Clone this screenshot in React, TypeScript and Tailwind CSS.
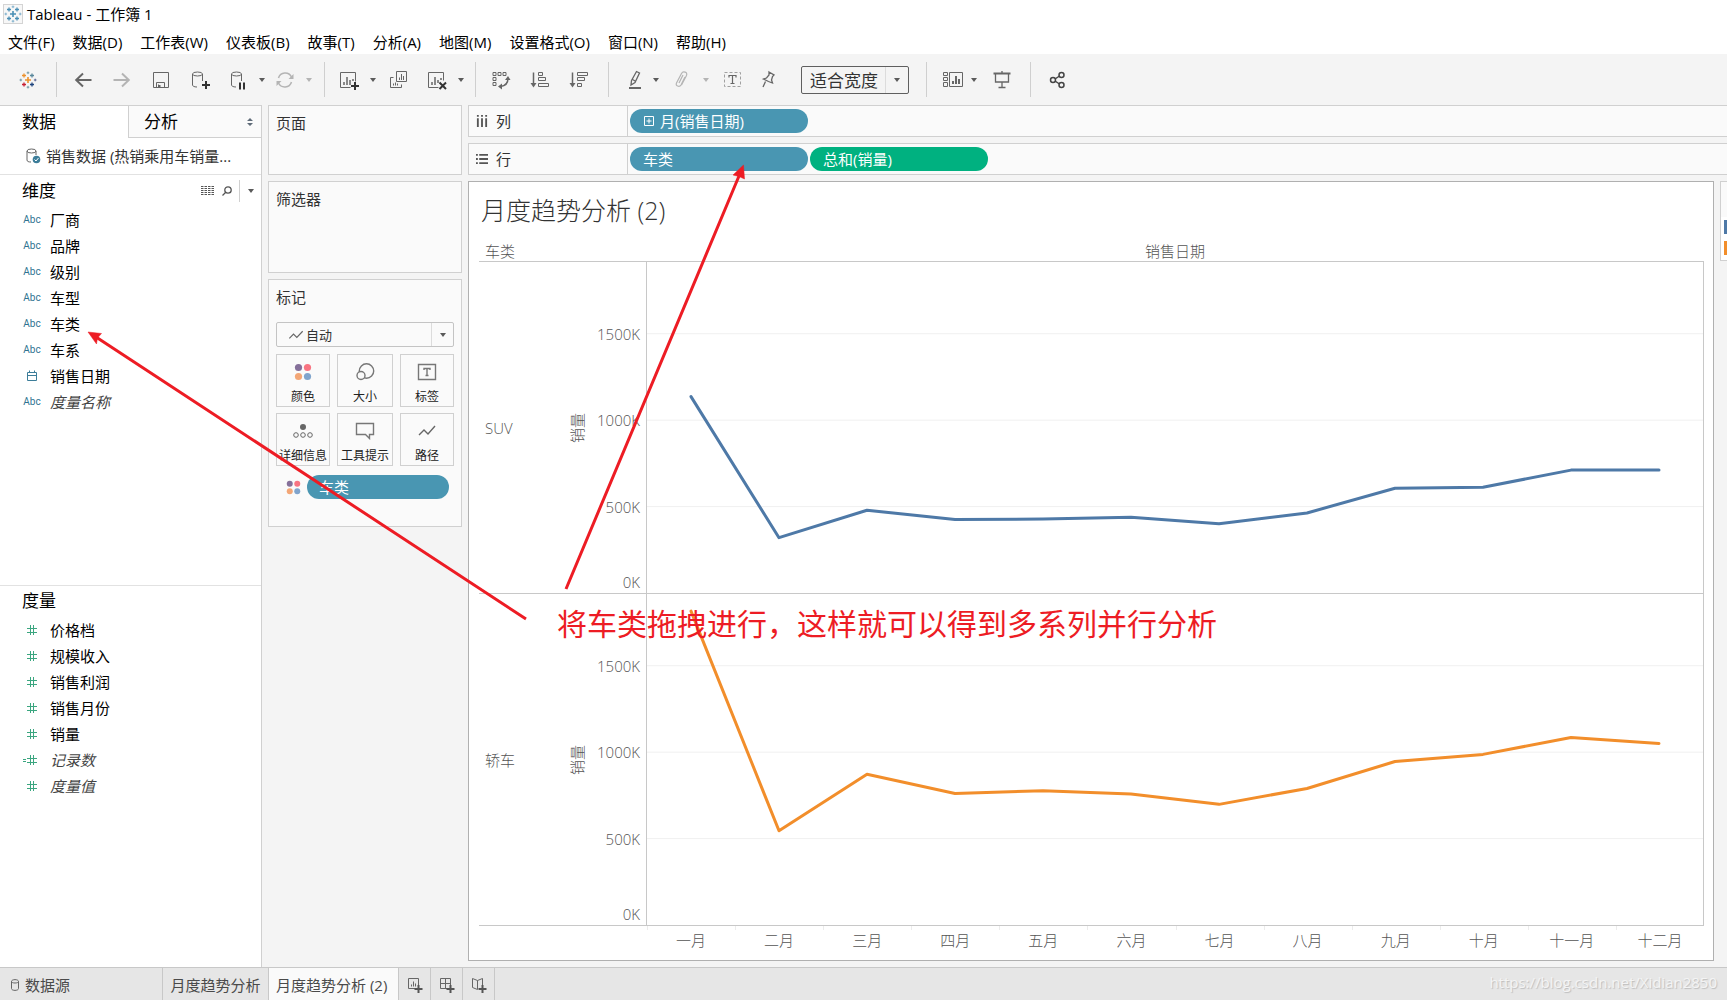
import React from 'react';

const MENUS = [
  '文件(F)', '数据(D)', '工作表(W)', '仪表板(B)', '故事(T)',
  '分析(A)', '地图(M)', '设置格式(O)', '窗口(N)', '帮助(H)',
];

const DIMENSIONS = [
  { name: '厂商', type: 'abc' },
  { name: '品牌', type: 'abc' },
  { name: '级别', type: 'abc' },
  { name: '车型', type: 'abc' },
  { name: '车类', type: 'abc' },
  { name: '车系', type: 'abc' },
  { name: '销售日期', type: 'date' },
  { name: '度量名称', type: 'abc', italic: true },
];

const MEASURES = [
  { name: '价格档', type: 'num' },
  { name: '规模收入', type: 'num' },
  { name: '销售利润', type: 'num' },
  { name: '销售月份', type: 'num' },
  { name: '销量', type: 'num' },
  { name: '记录数', type: 'calc', italic: true },
  { name: '度量值', type: 'num', italic: true },
];

const MONTHS = ['一月', '二月', '三月', '四月', '五月', '六月', '七月', '八月', '九月', '十月', '十一月', '十二月'];

const Y_MAX = 1915;
const Y_TICKS = [1500, 1000, 500];

const SERIES = [
  { name: 'SUV', color: '#4e79a7', values: [1136, 320, 479, 425, 428, 438, 400, 463, 606, 612, 711, 711] },
  { name: '轿车', color: '#f28e2b', values: [1816, 545, 872, 761, 777, 758, 698, 790, 946, 987, 1085, 1050] },
];

const Caret = ({ faded = false }: { faded?: boolean }) => (
  <svg width="6" height="4" viewBox="0 0 6 4" className={faded ? 'fill-[#b4b4b4]' : 'fill-[#5a5a5a]'}>
    <path d="M0 0h6L3 4z" />
  </svg>
);

const CaretButton = ({ label, width = 'w-2', faded }: { label: string; width?: string; faded?: boolean }) => (
  <button aria-label={label} className={`${width} h-8 flex items-center justify-center shrink-0`}>
    <Caret faded={faded} />
  </button>
);

type ToolProps = { label: string; width?: string; size?: number; faded?: boolean; children: React.ReactNode };

const Tool = ({ label, width = 'w-[39px]', size = 20, faded, children }: ToolProps) => (
  <button aria-label={label} className={`${width} h-8 flex items-center justify-center shrink-0`}>
    <svg width={size} height="20" viewBox={`0 0 ${size} 20`} fill="none" stroke={faded ? '#b4b4b4' : '#666666'} strokeWidth="1">
      {children}
    </svg>
  </button>
);

const Separator = ({ className = '' }: { className?: string }) => (
  <div className={`w-px h-[35px] bg-[#cfcfcf] shrink-0 ${className}`} />
);

const cross = (x: number, y: number, r: number) => `M${x - r} ${y}h${2 * r}M${x} ${y - r}v${2 * r}`;

const TableauMark = ({ mono = false }: { mono?: boolean }) => (
  <svg width="18" height="18" viewBox="0 0 18 18" fill="none" strokeWidth="1.3">
    <path d={cross(9, 9, 3)} stroke={mono ? '#4a8fb5' : '#eb912c'} strokeWidth="1.6" />
    <path d={cross(5, 4.5, 2)} stroke={mono ? '#4a8fb5' : '#eb912c'} />
    <path d={cross(13, 4.5, 2)} stroke={mono ? '#4a8fb5' : '#59879b'} />
    <path d={cross(5, 13.5, 2)} stroke={mono ? '#4a8fb5' : '#c72035'} />
    <path d={cross(13, 13.5, 2)} stroke={mono ? '#4a8fb5' : '#1f457e'} />
    <path d={cross(9, 1.8, 1.3)} stroke={mono ? '#7fb0cc' : '#7199a6'} strokeWidth="1" />
    <path d={cross(9, 16.2, 1.3)} stroke={mono ? '#7fb0cc' : '#7199a6'} strokeWidth="1" />
    <path d={cross(1.8, 9, 1.3)} stroke={mono ? '#7fb0cc' : '#7199a6'} strokeWidth="1" />
    <path d={cross(16.2, 9, 1.3)} stroke={mono ? '#7fb0cc' : '#5b6591'} strokeWidth="1" />
  </svg>
);

const ColorDots = ({ size = 18 }: { size?: number }) => (
  <svg width={size} height={size} viewBox="0 0 18 18">
    <circle cx="4.5" cy="4.5" r="3.6" fill="#85709a" />
    <circle cx="13.5" cy="4.5" r="3.6" fill="#f87482" />
    <circle cx="4.5" cy="13.5" r="3.6" fill="#f3a676" />
    <circle cx="13.5" cy="13.5" r="3.6" fill="#80a4cc" />
  </svg>
);

const Toolbar = () => (
  <div className="h-[51px] shrink-0 bg-[#f4f4f4] flex items-center">
    <button aria-label="开始页面" className="w-14 h-8 flex items-center justify-center shrink-0">
      <TableauMark />
    </button>
    <Separator className="mr-1.5" />
    <Tool label="撤消">
      <path d="M18.500 10H3M10 3.500 3.200 10l6.800 6.500" strokeWidth="2" />
    </Tool>
    <Tool label="重做" faded>
      <path d="M1.500 10H17M10 3.500 16.800 10 10 16.500" strokeWidth="2" />
    </Tool>
    <Tool label="保存">
      <path d="M2.500 2.500h15v15h-15zM5.500 17.500v-5h8v5M7.500 17.500v-3" />
      <path d="M8.500 15v2" strokeWidth="2" />
    </Tool>
    <Tool label="新建数据源">
      <ellipse cx="7.500" cy="4" rx="5" ry="2" />
      <path d="M2.500 4v11c0 1 1.500 2 4.500 2M12.500 4v7" />
      <path d="M12 15h8M16 11v8" stroke="#333" strokeWidth="2" />
    </Tool>
    <Tool label="暂停自动更新">
      <ellipse cx="7.500" cy="4" rx="5" ry="2" />
      <path d="M2.500 4v11c0 1 1.500 2 4.500 2M12.500 4v7" />
      <path d="M11 12.500v7M15 12.500v7" stroke="#333" strokeWidth="2" />
    </Tool>
    <CaretButton label="自动更新选项" />
    <Tool label="运行更新" width="w-[38px]" faded>
      <path d="M3.500 8A7 7 0 0 1 16.500 7M16.500 12A7 7 0 0 1 3.500 13" strokeWidth="1.500" />
      <path d="M18.500 4v5h-5zM1.500 16v-5h5z" fill="#b4b4b4" stroke="none" />
    </Tool>
    <CaretButton label="更新选项" width="w-2.5" faded />
    <Separator className="ml-2.5 mr-1" />
    <Tool label="新建工作表">
      <path d="M11.500 17.500h-10v-15h15v9" />
      <path d="M5 15v-3M8 15V7M11 15v-5M14 11V9" strokeWidth="1.500" />
      <path d="M12 16h8M16 12v8" stroke="#333" strokeWidth="2" />
    </Tool>
    <CaretButton label="新建选项" width="w-2.5" />
    <Tool label="复制" width="w-[41px]">
      <path d="M7.500 1.500h10v10h-10zM4.500 7.500h-3v10h11v-3" />
      <path d="M10.500 10V7.500M12.500 10V4M14.500 10V6M4.500 15.500v-2M6.500 15.500v-3M8.500 15.500v-2" />
    </Tool>
    <Tool label="清除工作表" width="w-9">
      <path d="M11.500 17.500h-10v-15h15v8" />
      <path d="M5 15v-3M8 15V7M11 13v-3M14 10V8" strokeWidth="1.500" />
      <path d="m12.500 12.500 6.500 6.500M19 12.500l-6.500 6.500" stroke="#333" strokeWidth="2" />
    </Tool>
    <CaretButton label="清除选项" width="w-3" />
    <Separator className="ml-2 mr-[5px]" />
    <Tool label="交换行和列">
      <path d="M2 2.500h3v3h-3zM7 2.500h3v3h-3zM12 2.500h3v3h-3zM2 7.500h3v3h-3zM2 12.500h3v3h-3z" />
      <path d="M17 8c0 5-2.500 8-7.500 8.500" strokeWidth="1.500" />
      <path d="m14 10 3-4 2.500 4zM11 13.500 7 16.500l4 3z" fill="#666" stroke="none" />
    </Tool>
    <Tool label="升序排序">
      <path d="M3.500 2.500v12" strokeWidth="1.500" />
      <path d="M.5 13h6l-3 4.500z" fill="#666" stroke="none" />
      <path d="M8.500 2.500h4v3h-4zM8.500 7.500h7v3h-7zM8.500 13.500h10v3h-10z" />
    </Tool>
    <Tool label="降序排序">
      <path d="M3.500 2.500v12" strokeWidth="1.500" />
      <path d="M.5 13h6l-3 4.500z" fill="#666" stroke="none" />
      <path d="M8.500 2.500h10v3h-10zM8.500 7.500h7v3h-7zM8.500 13.500h4v3h-4z" />
    </Tool>
    <Separator className="ml-2.5 mr-[9px]" />
    <Tool label="突出显示" width="w-[34px]">
      <path d="m6.500 10.500 5-9 3 1.500-4.500 9.500-4 2.500zM7.500 9.500l3.500 2" strokeWidth="1.300" />
      <path d="M4 18h12" strokeWidth="2" />
    </Tool>
    <CaretButton label="突出显示选项" />
    <Tool label="组成员" width="w-[42px]" faded>
      <path d="m14 7-4 8c-1.500 2.500-6 1-4.500-2l5-9.500c1.500-3 6.500-1.500 5 2l-5 9.500M12 5 8 13" strokeWidth="1.200" />
    </Tool>
    <CaretButton label="组选项" width="w-[7px]" faded />
    <Tool label="显示标记标签" width="w-[46px]">
      <path d="M2.500 2.500h16v14h-16z" strokeDasharray="3 2" stroke="#a0a0a0" />
      <path d="M7 7.500V5.500h7v2M10.500 5.500v8M8.500 13.500h4" strokeWidth="1.200" />
    </Tool>
    <Tool label="固定轴" width="w-[26px]">
      <path d="m11 2 5 3-1.500 1.500-1 3.500 1 3-4-1.500-5-2.500 3-1 2.500-3zM7.500 11.500 5 17" strokeWidth="1.300" />
    </Tool>
    <div className="ml-5 w-[108px] h-7 flex items-center rounded-xs border border-[#5f5f5f] shrink-0">
      <select aria-label="适合" className="appearance-none bg-transparent w-[84px] h-full pl-2 pt-0.5 text-[17px] text-[#333] border-r border-[#dcdcdc]">
        <option>适合宽度</option>
      </select>
      <span className="flex-1 flex justify-center"><Caret /></span>
    </div>
    <Separator className="ml-[17px] mr-[9px]" />
    <Tool label="显示卡" width="w-[34px]" size={22}>
      <path d="M1.500 2.500h4v3h-4zM1.500 7.500h4v3h-4zM1.500 12.500h4v4h-4zM7.500 2.500h13v14h-13z" />
      <path d="M11 14v-3M14 14V6M17 14V9" strokeWidth="2" />
    </Tool>
    <CaretButton label="显示卡选项" />
    <Tool label="演示模式" width="w-[47px]">
      <path d="M1.500 3.500h17" strokeWidth="2" />
      <path d="M3.500 4v8h13V4M10 12v5M10 1v2M6.500 17.500h7" strokeWidth="1.300" />
    </Tool>
    <Separator className="ml-[5px] mr-[9px]" />
    <Tool label="共享" width="w-9">
      <g strokeWidth="1.500" stroke="#444">
        <circle cx="5" cy="10" r="2.500" />
        <circle cx="13.500" cy="5" r="2.500" />
        <circle cx="13.500" cy="15" r="2.500" />
        <path d="m7 9 4.500-3M7 11l4.500 3" />
      </g>
    </Tool>
  </div>
);

const FieldIcon = ({ type }: { type: string }) => {
  if (type === 'abc') {
    return <span className="font-['Roboto'] text-[10px] text-[#2f7391]">Abc</span>;
  }
  if (type === 'date') {
    return (
      <svg width="12" height="12" viewBox="0 0 12 12" fill="none" stroke="#3c7d99">
        <path d="M1.500 2.500h9v8h-9zM1.500 5.500h9M3.500 .5v2M8.500 .5v2" />
      </svg>
    );
  }
  return (
    <svg width="22" height="12" viewBox="0 0 22 12" fill="none" stroke="#3ba680">
      <path d="M6 4.500h10M6 8.500h10M9.500 1v10M12.500 1v10" />
      {type === 'calc' && <path d="M2 5.500h3M2 7.500h3" />}
    </svg>
  );
};

type Field = { name: string; type: string; italic?: boolean };

const FieldList = ({ fields }: { fields: Field[] }) => (
  <ul>
    {fields.map((field) => (
      <li key={field.name} className="h-[26px] flex items-center">
        <span className="ml-[21px] w-[22px] mr-[7px] flex justify-center">
          <FieldIcon type={field.type} />
        </span>
        <span className={field.italic ? 'italic text-[#444]' : 'text-black'}>{field.name}</span>
      </li>
    ))}
  </ul>
);

const DataPane = () => (
  <aside className="w-[262px] shrink-0 bg-white border-r border-t border-[#d0d0d0] flex flex-col">
    <div className="flex h-8 shrink-0 text-[17px] text-black">
      <button className="w-32 pl-[22px] text-left">数据</button>
      <button className="flex-1 pl-[15px] pr-2 flex items-center justify-between bg-[#fafafa] border-l border-b border-[#d0d0d0]">
        分析
        <svg width="6" height="8" viewBox="0 0 6 8" className="fill-[#5f6b78]">
          <path d="M0 3h6L3 0zM0 5h6L3 8z" />
        </svg>
      </button>
    </div>
    <div className="h-[37px] shrink-0 flex items-center pl-[25px] pb-px gap-1 border-b border-[#e2e2e2] text-[#333]">
      <svg width="17" height="18" viewBox="0 0 17 18" fill="none" stroke="#666">
        <ellipse cx="6.500" cy="4" rx="4.500" ry="2" />
        <path d="M2 4v9c0 1.500 1.500 2 4 2M11 4v4" />
        <circle cx="11.500" cy="12.500" r="3.800" fill="#3c7d99" stroke="none" />
        <path d="m9.500 12.500 1.500 1.500 2.500-3" stroke="#fff" />
      </svg>
      <span className="truncate">销售数据 (热销乘用车销量...</span>
    </div>
    <section className="flex-[411] border-b border-[#e2e2e2]">
      <div className="h-8 flex items-center pl-[22px] pr-[7px] text-[17px] text-black">
        <h2 className="flex-1">维度</h2>
        <button aria-label="查看数据" className="mr-2">
          <svg width="13" height="10" viewBox="0 0 13 10" stroke="#555" strokeDasharray="2.500 1">
            <path d="M0 .5h13M0 2.500h13M0 4.500h13M0 6.500h13M0 8.500h13" />
          </svg>
        </button>
        <button aria-label="查找字段" className="mr-[7px]">
          <svg width="10" height="10" viewBox="0 0 10 10" fill="none" stroke="#555" strokeWidth="1.300">
            <circle cx="6" cy="4" r="3.200" />
            <path d="M3.500 6.500.5 9.500" />
          </svg>
        </button>
        <div className="w-px h-[22px] bg-[#d0d0d0]" />
        <button aria-label="维度选项" className="ml-2"><Caret /></button>
      </div>
      <FieldList fields={DIMENSIONS} />
    </section>
    <section className="flex-[382]">
      <h2 className="h-[31px] flex items-center pl-[22px] text-[17px] text-black">度量</h2>
      <FieldList fields={MEASURES} />
    </section>
  </aside>
);

const MarkButton = ({ label, children }: { label: string; children: React.ReactNode }) => (
  <button className="h-[53px] border border-[#d0d0d0] bg-[#fafafa] flex flex-col items-center justify-between pt-2 pb-px text-xs text-[#222] whitespace-nowrap">
    {children}
    {label}
  </button>
);

const LineIcon = () => (
  <svg width="16" height="10" viewBox="0 0 18 12" fill="none" stroke="#666" strokeWidth="1.400">
    <path d="m1 10 5-5 4 4 7-7.500" />
  </svg>
);

const Cards = () => (
  <div className="w-[194px] shrink-0 flex flex-col gap-1.5 text-[#333]">
    <section className="h-[70px] bg-[#fafafa] border border-[#d0d0d0] pl-[7px] pt-[5px]">
      <h2>页面</h2>
    </section>
    <section className="h-[92px] bg-[#fafafa] border border-[#d0d0d0] pl-[7px] pt-[5px]">
      <h2>筛选器</h2>
    </section>
    <section className="h-[248px] bg-[#fafafa] border border-[#d0d0d0] px-[7px] pt-[5px]">
      <h2>标记</h2>
      <div className="mt-[13px] h-[25px] flex items-center rounded-xs border border-[#c4c4c4]">
        <span className="pl-[11px]"><LineIcon /></span>
        <select aria-label="标记类型" className="appearance-none bg-transparent flex-1 h-full pl-0.5 text-[13px] border-r border-[#dcdcdc]">
          <option>自动</option>
        </select>
        <span className="w-[21px] flex justify-center"><Caret /></span>
      </div>
      <div className="mt-[7px] grid grid-cols-[54px_56px_54px] gap-x-[7px] gap-y-1.5">
        <MarkButton label="颜色"><ColorDots /></MarkButton>
        <MarkButton label="大小">
          <svg width="20" height="18" viewBox="0 0 20 18" fill="none" stroke="#777" strokeWidth="1.400">
            <circle cx="11.500" cy="8" r="7.200" />
            <circle cx="6" cy="12.500" r="4" fill="#fafafa" />
          </svg>
        </MarkButton>
        <MarkButton label="标签">
          <svg width="20" height="18" viewBox="0 0 20 18" fill="none" stroke="#777" strokeWidth="1.400">
            <path d="M1.500 1.500h17v15h-17zM7 7V5.500h6V7M10 5.500v7M8.500 12.500h3" />
          </svg>
        </MarkButton>
        <MarkButton label="详细信息">
          <svg width="20" height="18" viewBox="0 0 20 18" fill="none" stroke="#666">
            <circle cx="10" cy="5" r="3" fill="#666" stroke="none" />
            <circle cx="3" cy="13" r="2.300" />
            <circle cx="10" cy="13" r="2.300" />
            <circle cx="17" cy="13" r="2.300" />
          </svg>
        </MarkButton>
        <MarkButton label="工具提示">
          <svg width="20" height="18" viewBox="0 0 20 18" fill="none" stroke="#777" strokeWidth="1.400">
            <path d="M1.500 1.500h17v11h-4v4l-4-4h-9z" />
          </svg>
        </MarkButton>
        <MarkButton label="路径">
          <svg width="18" height="18" viewBox="0 0 18 18" fill="none" stroke="#666" strokeWidth="1.400">
            <path d="m1 13 5-5 4 4 7-8" />
          </svg>
        </MarkButton>
      </div>
      <div className="mt-[9px] flex items-center pl-2.5 pr-[5px] gap-1.5">
        <ColorDots size={15} />
        <button className="flex-1 h-6 rounded-full bg-[#4996b2] text-white text-left pl-3 leading-6">车类</button>
      </div>
    </section>
  </div>
);

const Shelf = ({ label, icon, children }: { label: string; icon: React.ReactNode; children: React.ReactNode }) => (
  <div className="h-8 shrink-0 flex bg-[#fafafa] border border-r-0 border-[#d0d0d0]">
    <div className="w-[159px] flex items-center pl-[7px] gap-2 border-r border-[#d0d0d0] text-[#333]">
      {icon}
      {label}
    </div>
    <div className="flex items-center pl-0.5 gap-0.5">{children}</div>
  </div>
);

const pointsFor = (values: number[]) =>
  values.map((v, i) => `${((i + 0.5) / values.length) * 1000},${(1 - v / Y_MAX) * 1000}`).join(' ');

const Worksheet = () => (
  <main className="flex-1 min-w-0 bg-white border border-[#b0b0b0] pl-2.5 pr-[9px] flex flex-col text-[#555]">
    <h1 className="mt-2.5 h-9 pl-0.5 text-[25px] leading-9 font-light text-[#333]">月度趋势分析 (2)</h1>
    <div className="mt-[13px] h-5 flex items-center pl-1.5 leading-5 font-light">
      <span className="w-[60px]">车类</span>
      <span className="flex-1 text-center pl-[101px]">销售日期</span>
    </div>
    <div className="flex-1 flex flex-col border-t border-r border-[#c8c8c8]">
      {SERIES.map((series) => (
        <div key={series.name} className="flex-1 flex border-b border-[#c8c8c8]">
          <div className="w-[84px] pl-1.5 flex items-center font-light">{series.name}</div>
          <div className="w-7 flex items-center justify-center font-light leading-5">
            <span className="-rotate-90 whitespace-nowrap">销量</span>
          </div>
          <div className="relative w-[56px] border-r border-[#c8c8c8] font-light leading-5">
            {Y_TICKS.map((tick) => (
              <span
                key={tick}
                className="absolute right-1.5 -translate-y-1/2"
                style={{ top: `${(1 - tick / Y_MAX) * 100}%` }}
              >
                {tick}K
              </span>
            ))}
            <span className="absolute right-1.5 bottom-px">0K</span>
          </div>
          <div className="relative flex-1">
            <svg className="absolute inset-0 w-full h-full" viewBox="0 0 1000 1000" preserveAspectRatio="none" fill="none">
              {Y_TICKS.map((tick) => (
                <line
                  key={tick}
                  x1="0"
                  x2="1000"
                  y1={(1 - tick / Y_MAX) * 1000}
                  y2={(1 - tick / Y_MAX) * 1000}
                  stroke="#f0f0f0"
                  vectorEffect="non-scaling-stroke"
                />
              ))}
              <polyline
                points={pointsFor(series.values)}
                stroke={series.color}
                strokeWidth="3"
                strokeLinejoin="round"
                strokeLinecap="round"
                vectorEffect="non-scaling-stroke"
              />
            </svg>
          </div>
        </div>
      ))}
    </div>
    <div className="h-[34px] pl-[168px] grid grid-cols-12 font-light">
      {MONTHS.map((month) => (
        <div key={month} className="text-center leading-5">
          <div className="h-1 border-l border-[#ececec]" />
          {month}
        </div>
      ))}
    </div>
  </main>
);

const SheetTabs = () => (
  <footer className="h-[33px] shrink-0 flex bg-[#e6e6e6] border-t border-[#c8c8c8] text-[#4a4a4a]">
    <button className="w-[163px] pl-[11px] pt-0.5 flex items-center gap-1.5 border-r border-[#c8c8c8]">
      <svg width="8" height="12" viewBox="0 0 8 12" fill="none" stroke="#666">
        <path d="M.5 2.500v7c0 2.500 7 2.500 7 0v-7c0-2.500-7-2.500-7 0 0 2 7 2 7 0" />
      </svg>
      数据源
    </button>
    <button className="w-[106px] pt-0.5 border-r border-[#c8c8c8]">月度趋势分析</button>
    <button className="w-[130px] pt-0.5 pl-[7px] text-left bg-[#fafafa] border-r border-[#c8c8c8]">月度趋势分析 (2)</button>
    <button aria-label="新建工作表" className="w-8 pt-0.5 flex items-center justify-center border-r border-[#c8c8c8]">
      <svg width="16" height="16" viewBox="0 0 16 16" fill="none" stroke="#666">
        <path d="M8 11.500H1.500v-10h10V8M4.500 9.500v-2M6.500 9.500v-5M8.500 9.500v-3" />
        <path d="M7.500 12h8M11.500 8v8" stroke="#555" strokeWidth="2" />
      </svg>
    </button>
    <button aria-label="新建仪表板" className="w-8 pt-0.5 flex items-center justify-center border-r border-[#c8c8c8]">
      <svg width="16" height="16" viewBox="0 0 16 16" fill="none" stroke="#666">
        <path d="M8 11.500H1.500v-10h10V8M6.500 1.500v10M1.500 6.500h10" />
        <path d="M7.500 12h8M11.500 8v8" stroke="#555" strokeWidth="2" />
      </svg>
    </button>
    <button aria-label="新建故事" className="w-8 pt-0.5 flex items-center justify-center border-r border-[#c8c8c8]">
      <svg width="16" height="16" viewBox="0 0 16 16" fill="none" stroke="#666">
        <path d="M11.500 8V1.500l-5 2-5-2v9l5 2V3.500" />
        <path d="M7.500 12h8M11.500 8v8" stroke="#555" strokeWidth="2" />
      </svg>
    </button>
  </footer>
);

// Red arrows and note drawn over the workspace
const Annotations = () => (
  <div className="absolute inset-0 pointer-events-none overflow-hidden">
    <svg className="absolute inset-0 w-full h-full" stroke="#ed1c24" fill="#ed1c24">
      <path d="M526 619 96 337M566 589 739 176" strokeWidth="3" />
      <path d="m88 332 13.500 1.500-4 4.500-1 6zM743.500 165l1 14-5.500-2.500-6-1.500z" strokeWidth="0.500" />
    </svg>
    <p className="absolute left-[557px] top-[604px] text-[30px] leading-10 text-[#ed1c24] whitespace-nowrap">
      将车类拖拽进行，这样就可以得到多系列并行分析
    </p>
    <p className="absolute right-2.5 bottom-1.5 text-[15px] leading-6 text-[#f4f4f4] [text-shadow:1px_1px_1px_#bdbdbd]">
      https://blog.csdn.net/Xidian2850
    </p>
  </div>
);

export default function App() {
  return (
    <div className="relative h-screen flex flex-col overflow-hidden bg-[#f4f4f4] font-['Open_Sans','Noto_Sans_CJK_SC',sans-serif] text-[15px] leading-6">
      <header className="bg-white text-black shrink-0">
        <div className="h-7 flex items-center pl-[3px] gap-1">
          <span className="border border-[#d4d4d4] bg-[#f7f7f7]"><TableauMark mono /></span>
          <span>Tableau - 工作簿 1</span>
        </div>
        <nav className="h-[26px] flex items-center pl-2 pt-0.5 gap-[18px]">
          {MENUS.map((menu) => (
            <button key={menu} className="whitespace-nowrap">{menu}</button>
          ))}
        </nav>
      </header>
      <Toolbar />
      <div className="flex-1 min-h-0 flex">
        <DataPane />
        <div className="flex-1 min-w-0 flex gap-1.5 pl-1.5">
          <Cards />
          <div className="flex-1 min-w-0 flex flex-col gap-1.5">
            <Shelf
              label="列"
              icon={
                <svg width="12" height="12" viewBox="0 0 13 13" stroke="#555" strokeWidth="2">
                  <path d="M2 0v2M2 3.500V13M6.500 0v2M6.500 3.500V13M11 0v2M11 3.500V13" />
                </svg>
              }
            >
              <button className="w-[178px] h-6 rounded-full bg-[#4996b2] text-white flex items-center pl-3.5 gap-1.5">
                <svg width="10" height="10" viewBox="0 0 10 10" fill="none" stroke="#fff">
                  <path d="M.5.5h9v9h-9zM2.500 5h5M5 2.500v5" />
                </svg>
                月(销售日期)
              </button>
            </Shelf>
            <Shelf
              label="行"
              icon={
                <svg width="12" height="12" viewBox="0 0 13 13" stroke="#555" strokeWidth="2">
                  <path d="M0 2h2M3.500 2H13M0 6.500h2M3.500 6.500H13M0 11h2M3.500 11H13" />
                </svg>
              }
            >
              <button className="w-[178px] h-6 rounded-full bg-[#4996b2] text-white text-left pl-[13px]">车类</button>
              <button className="w-[178px] h-6 rounded-full bg-[#00b180] text-white text-left pl-[13px]">总和(销量)</button>
            </Shelf>
            <div className="flex-1 min-h-0 flex gap-1.5 pb-1.5">
              <Worksheet />
              <div className="w-[7px] h-20 shrink-0 bg-white border-l border-y border-[#d0d0d0] flex flex-col">
                <div className="h-[35px] bg-[#fafafa]" />
                <div className="mt-[3px] ml-[3px] h-3.5 bg-[#4e79a7]" />
                <div className="mt-[7px] ml-[3px] h-3.5 bg-[#f28e2b]" />
              </div>
            </div>
          </div>
        </div>
      </div>
      <SheetTabs />
      <Annotations />
    </div>
  );
}
